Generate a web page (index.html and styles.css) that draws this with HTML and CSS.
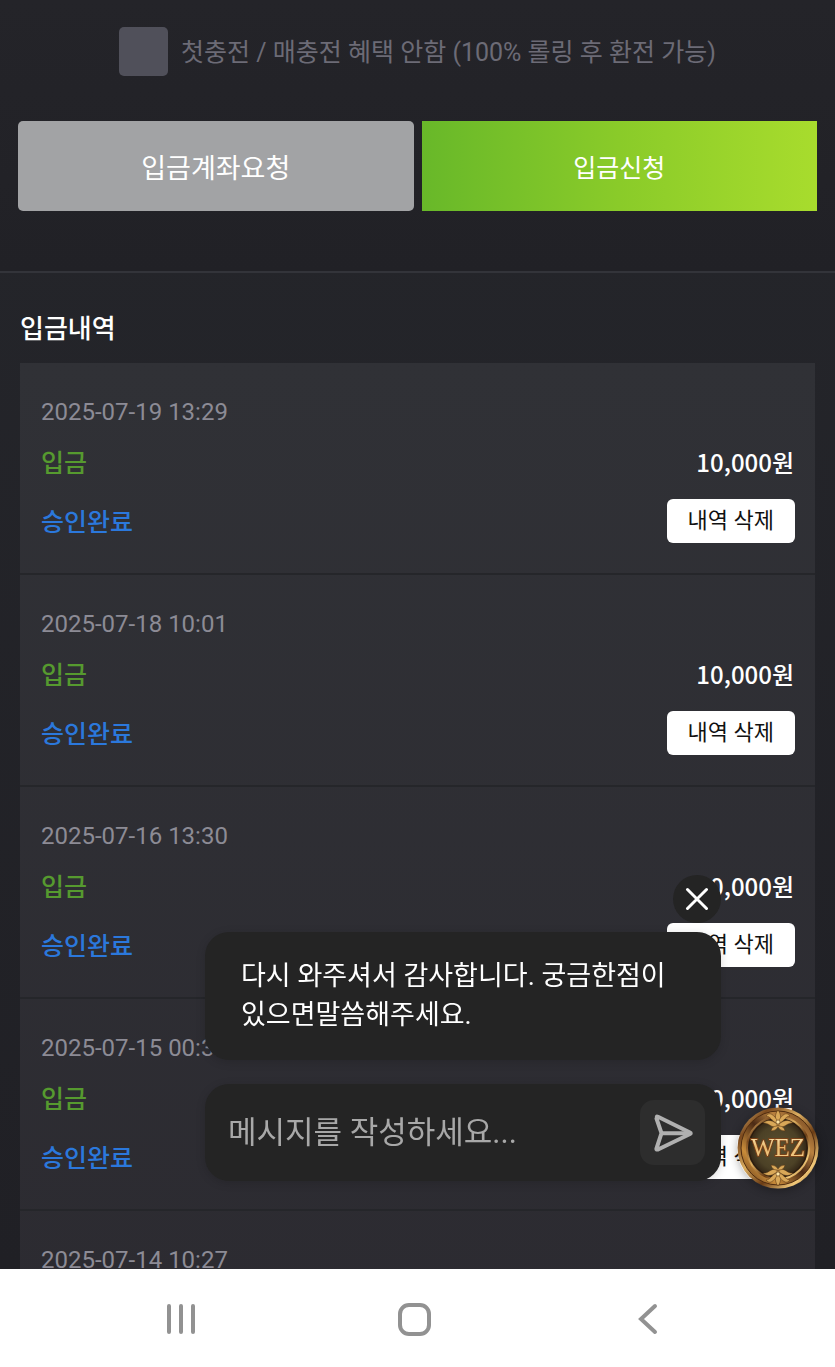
FILE: index.html
```html
<!DOCTYPE html>
<html lang="ko">

<head>
    <meta charset="UTF-8">
    <meta name="viewport" content="width=device-width, initial-scale=1.0">
    <title>입금내역</title>
    <link rel="stylesheet" href="styles.css">
</head>

<body>

    <main class="content">
        <form class="deposit">
            <label class="bonus" for="noBonus">
                <input type="checkbox" id="noBonus" class="bonus-check">
                <span class="bonus-text">첫충전 / 매충전 혜택 안함 (100% 롤링 후 환전 가능)</span>
            </label>
            <div class="deposit-buttons">
                <button type="button" class="btn btn-account">입금계좌요청</button>
                <button type="button" class="btn btn-apply">입금신청</button>
            </div>
        </form>

        <section class="history">
            <h2>입금내역</h2>
            <ul class="history-list">
                <li class="item">
                    <time class="date">2025-07-19 13:29</time>
                    <div class="line"><span class="type">입금</span><span class="amount">10,000원</span></div>
                    <div class="line"><span class="status">승인완료</span><button type="button" class="delete">내역 삭제</button></div>
                </li>
                <li class="item">
                    <time class="date">2025-07-18 10:01</time>
                    <div class="line"><span class="type">입금</span><span class="amount">10,000원</span></div>
                    <div class="line"><span class="status">승인완료</span><button type="button" class="delete">내역 삭제</button></div>
                </li>
                <li class="item">
                    <time class="date">2025-07-16 13:30</time>
                    <div class="line"><span class="type">입금</span><span class="amount">10,000원</span></div>
                    <div class="line"><span class="status">승인완료</span><button type="button" class="delete">내역 삭제</button></div>
                </li>
                <li class="item">
                    <time class="date">2025-07-15 00:32</time>
                    <div class="line"><span class="type">입금</span><span class="amount">10,000원</span></div>
                    <div class="line"><span class="status">승인완료</span><button type="button" class="delete">내역 삭제</button></div>
                </li>
                <li class="item">
                    <time class="date">2025-07-14 10:27</time>
                </li>
            </ul>
        </section>
    </main>

    <!-- chat -->
    <div class="chat">
        <button type="button" class="chat-close" aria-label="닫기">
            <svg width="24" height="24" viewBox="0 0 24 24" fill="none" stroke="#fff" stroke-width="3" stroke-linecap="round">
                <path d="M2.5 2.5l19 19M21.5 2.5l-19 19" />
            </svg>
        </button>
        <p class="chat-message">다시 와주셔서 감사합니다. 궁금한점이 있으면말씀해주세요.</p>
        <form class="chat-form">
            <input type="text" class="chat-input" placeholder="메시지를 작성하세요..." aria-label="메시지">
            <button type="button" class="chat-send" aria-label="보내기">
                <svg width="42" height="42" viewBox="0 0 42 42" fill="none" stroke="#b0b0b0" stroke-width="4" stroke-linejoin="round" stroke-linecap="round">
                    <path d="M5.500 5.500Q4 4 6 4.800L38 20.500Q39.500 21.200 38 22L6 37.500Q4 38 4.500 36.500L9.500 21.200L4.500 6.500Z" />
                    <path d="M10 21.200H37" />
                </svg>
            </button>
        </form>
    </div>

    <button type="button" class="coin" aria-label="WEZ 상담">
        <svg width="82" height="82" viewBox="0 0 82 82">
            <defs>
                <linearGradient id="rim" x1="0" y1="0" x2="1" y2="1">
                    <stop offset="0" stop-color="#f6d58a" />
                    <stop offset="0.2" stop-color="#7c4a1e" />
                    <stop offset="0.42" stop-color="#dcae60" />
                    <stop offset="0.62" stop-color="#6b3c14" />
                    <stop offset="0.82" stop-color="#f1c878" />
                    <stop offset="1" stop-color="#8a5016" />
                </linearGradient>
                <linearGradient id="ring" x1="1" y1="0" x2="0" y2="1">
                    <stop offset="0" stop-color="#5e3517" />
                    <stop offset="0.3" stop-color="#b9813f" />
                    <stop offset="0.5" stop-color="#4b2a15" />
                    <stop offset="0.75" stop-color="#c98c3a" />
                    <stop offset="1" stop-color="#4a2812" />
                </linearGradient>
                <radialGradient id="face">
                    <stop offset="0" stop-color="#5b5030" />
                    <stop offset="0.7" stop-color="#4c4126" />
                    <stop offset="1" stop-color="#2c1f12" />
                </radialGradient>
                <linearGradient id="letters" x1="0" y1="0" x2="0" y2="1">
                    <stop offset="0" stop-color="#fff0c0" />
                    <stop offset="0.5" stop-color="#e8b86c" />
                    <stop offset="1" stop-color="#f7d390" />
                </linearGradient>
                <g id="leaf" fill="#d9a858" stroke="#553312" stroke-width="0.5">
                    <path d="M41 3C45 8 44 14 41 21C38 14 37 8 41 3Z" />
                    <path d="M40 13C35 5 31 6 29 9C33 9 35 14 40 17Z" />
                    <path d="M42 13C47 5 51 6 53 9C49 9 47 14 42 17Z" />
                    <path d="M40 17C34 12 29 13 26 16C31 15 34 21 40 20Z" />
                    <path d="M42 17C48 12 53 13 56 16C51 15 48 21 42 20Z" />
                    <path d="M40 19Q35 19 34 24Q39 24 41 20Q43 24 48 24Q47 19 42 19Z" />
                    <circle cx="41" cy="15" r="2" fill="#ffe6a4" />
                </g>
            </defs>
            <circle cx="41" cy="41" r="40.500" fill="url(#rim)" />
            <circle cx="41" cy="41" r="37" fill="url(#ring)" stroke="#4f2c10" stroke-width="1" />
            <circle cx="41" cy="41" r="31" fill="url(#face)" stroke="url(#rim)" stroke-width="2" />
            <circle cx="41" cy="41" r="29" fill="none" stroke="#2b1a0c" stroke-width="1" />
            <use href="#leaf" />
            <use href="#leaf" transform="rotate(180 41 41)" />
            <text x="41" y="49" class="coin-text" fill="url(#letters)">WEZ</text>
        </svg>
    </button>

    <!-- system navigation -->
    <nav class="navbar">
        <button type="button" class="nav-btn" aria-label="최근 앱">
            <svg width="34" height="34" viewBox="0 0 34 34" fill="none" stroke="#929292" stroke-width="4" stroke-linecap="round">
                <path d="M5 4v26M17 4v26M29 4v26" />
            </svg>
        </button>
        <button type="button" class="nav-btn" aria-label="홈">
            <svg width="34" height="34" viewBox="0 0 34 34" fill="none" stroke="#929292" stroke-width="4">
                <rect x="2" y="3" width="29" height="29" rx="9" />
            </svg>
        </button>
        <button type="button" class="nav-btn" aria-label="뒤로">
            <svg width="34" height="34" viewBox="0 0 34 34" fill="none" stroke="#929292" stroke-width="4" stroke-linecap="round">
                <path d="M24 4L10 17L24 30" />
            </svg>
        </button>
    </nav>

</body>

</html>
```
FILE: styles.css
```css
* {
    box-sizing: border-box;
}

body {
    margin: 0;
    height: 100vh;
    display: flex;
    flex-direction: column;
    font-family: Roboto, "Noto Sans CJK KR", sans-serif;
    font-size: 25px;
    color: #fff;
    background: #222227;
}

button,
input {
    font-family: inherit;
    margin: 0;
}

button {
    border: none;
    padding: 0;
    cursor: pointer;
}

svg {
    display: block;
}

.content {
    flex: 1;
    min-height: 0;
    overflow-y: auto;
    scrollbar-width: none;
    background: linear-gradient(#25262b, #202025);
}

/* deposit form */
.deposit {
    padding: 27px 18px 60px;
    background: linear-gradient(#242429, #212126);
    border-bottom: 2px solid #33343a;
}

.bonus {
    display: flex;
    justify-content: center;
    align-items: center;
    gap: 13px;
    color: #6c6b76;
}

.bonus-check {
    appearance: none;
    width: 49px;
    height: 49px;
    margin: 0;
    border-radius: 5px;
    background: #50505a;
}

.bonus-check:checked {
    background: #69b827;
}

.bonus-text {
    padding-bottom: 4px;
}

.deposit-buttons {
    display: grid;
    grid-template-columns: 1fr 1fr;
    gap: 8px;
    margin-top: 45px;
}

.btn {
    height: 90px;
    color: #fff;
}

.btn-account {
    font-size: 27px;
    background: #a2a3a5;
    border-radius: 5px;
}

.btn-apply {
    font-size: 25px;
    background: linear-gradient(90deg, #68b829, #8acb29 50%, #a8dc2d);
}

/* history */
.history {
    padding: 36px 20px 0;
}

.history h2 {
    margin: 0 0 14px;
    font-size: 26px;
    font-weight: 500;
    line-height: 40px;
}

.history-list {
    list-style: none;
    margin: 0;
    padding: 0;
    background: linear-gradient(#303136, #2c2b31);
}

.item {
    display: flex;
    flex-direction: column;
    gap: 16px;
    padding: 31px 20px 30px 21px;
    border-bottom: 2px solid #25262a;
    line-height: 36px;
}

.line {
    display: flex;
    justify-content: space-between;
    align-items: center;
}

.date {
    font-size: 24px;
    color: #8c8b95;
}

.type,
.status {
    font-weight: 500;
}

.type {
    color: #569a2f;
}

.status {
    padding-top: 4px;
    color: #2b78dc;
}

.amount {
    padding: 0 1px 4px 0;
    font-family: "Noto Sans CJK KR", sans-serif;
    font-size: 24px;
    font-weight: 500;
    line-height: 32px;
}

.delete {
    height: 44px;
    margin-top: 1px;
    padding: 0 21px 6px;
    font-size: 22px;
    color: #111;
    background: #fff;
    border-radius: 6px;
}

/* chat */
.chat {
    position: fixed;
    right: 114px;
    bottom: 186px;
    width: 516px;
    max-width: calc(100% - 134px);
    display: flex;
    flex-direction: column;
}

.chat-close {
    align-self: flex-end;
    display: flex;
    align-items: center;
    justify-content: center;
    width: 48px;
    height: 48px;
    margin-bottom: 9px;
    border-radius: 50%;
    background: #242424;
}

.chat-message {
    margin: 0 0 24px;
    padding: 25px 36px;
    font-size: 27px;
    line-height: 39px;
    background: #242424;
    border-radius: 24px;
    box-shadow: 0 2px 10px rgba(0, 0, 0, 0.15);
}

.chat-form {
    display: flex;
    align-items: center;
    padding: 16px 16px 16px 23px;
    background: #242424;
    border-radius: 24px;
    box-shadow: 0 2px 10px rgba(0, 0, 0, 0.15);
}

.chat-input {
    flex: 1;
    min-width: 0;
    padding: 0;
    border: none;
    outline: none;
    font-size: 31px;
    color: #fff;
    background: none;
}

.chat-input::placeholder {
    color: #a8a8a8;
}

.chat-send {
    display: flex;
    align-items: center;
    justify-content: center;
    width: 65px;
    height: 65px;
    border-radius: 14px;
    background: #2d2d2d;
}

.coin {
    position: fixed;
    right: 16px;
    bottom: 178px;
    border-radius: 50%;
    background: none;
    box-shadow: 0 2px 10px rgba(0, 0, 0, 0.3);
}

.coin-text {
    font-family: "Liberation Serif", serif;
    font-size: 25px;
    text-anchor: middle;
    stroke: #7a4218;
    stroke-width: 2px;
    paint-order: stroke;
}

/* bottom navigation */
.navbar {
    display: flex;
    height: 98px;
    padding: 2px 70px 0 64px;
    background: #fff;
}

.nav-btn {
    flex: 1;
    display: flex;
    align-items: center;
    justify-content: center;
    background: none;
}
```
